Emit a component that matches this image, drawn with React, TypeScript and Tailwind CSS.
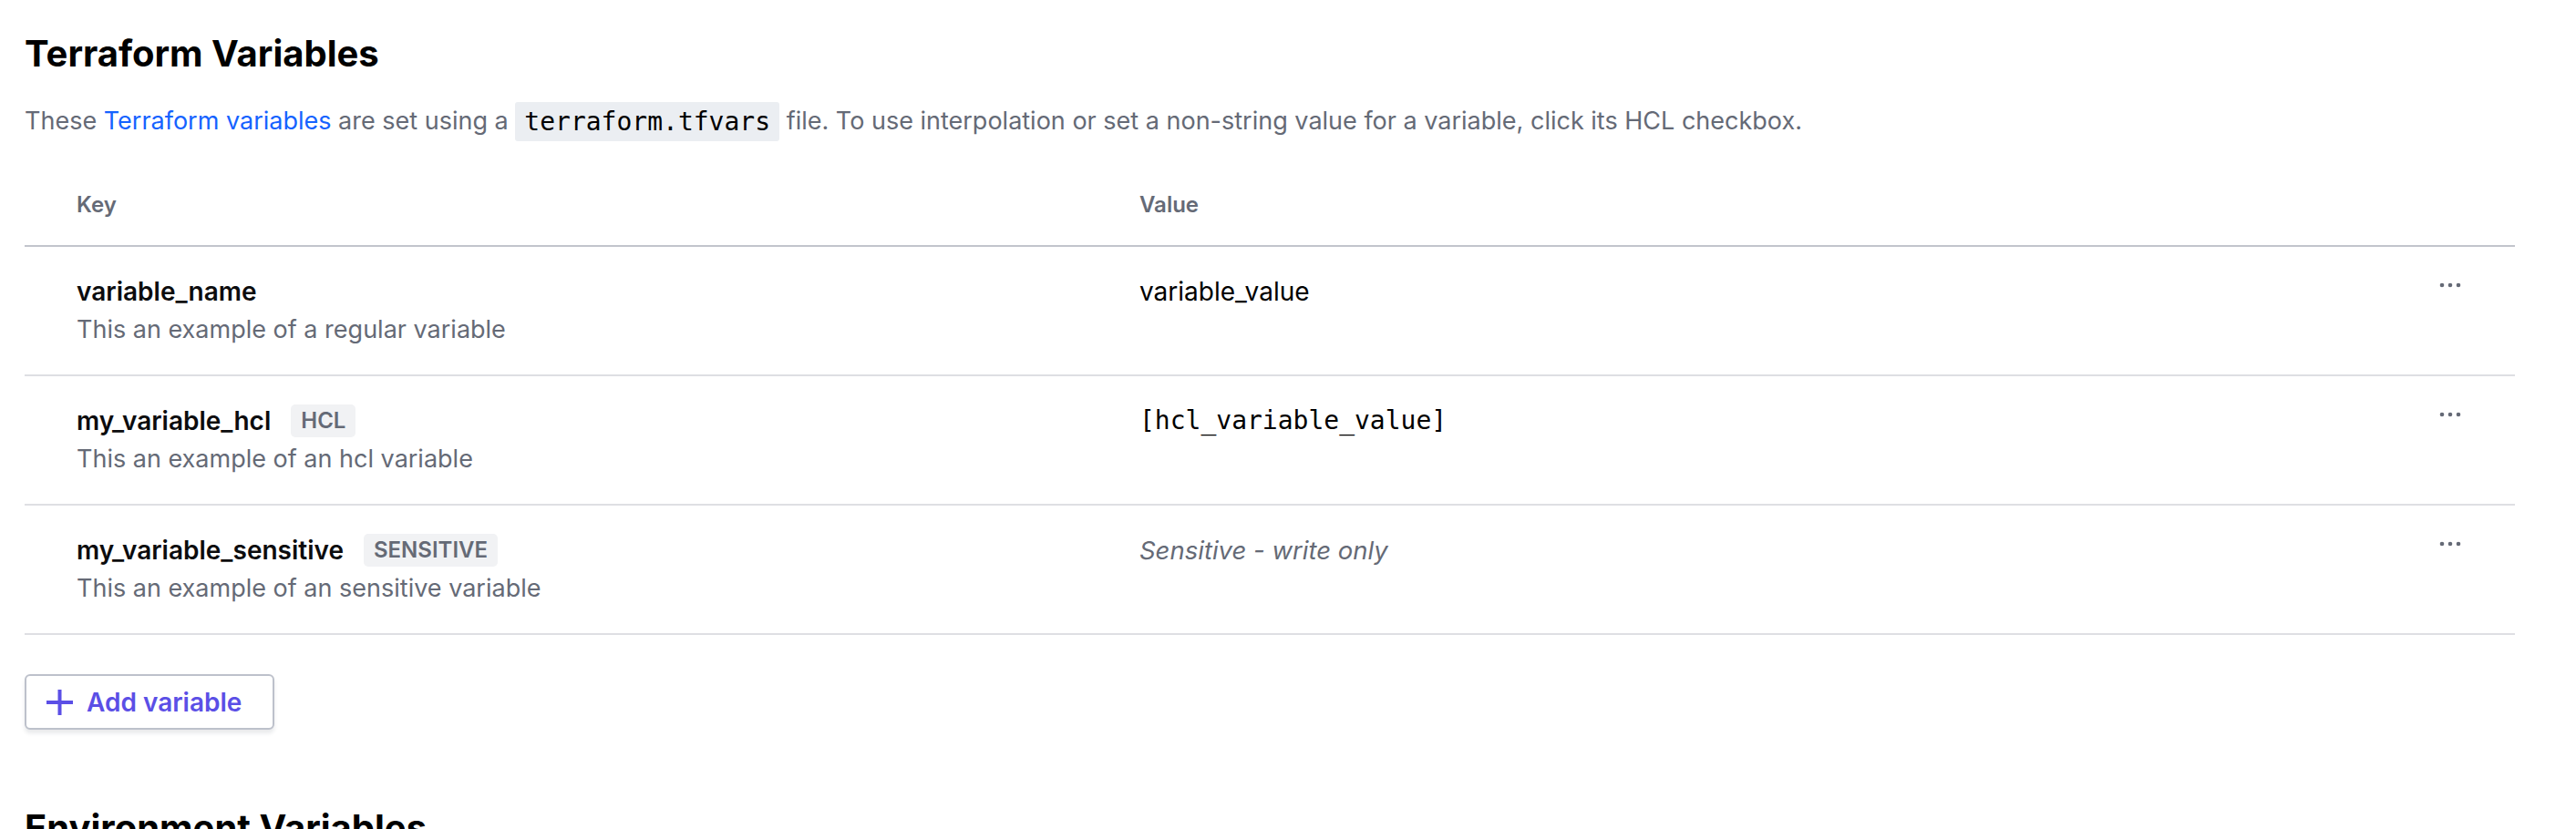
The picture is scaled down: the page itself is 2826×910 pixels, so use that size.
import React from "react";

interface Variable {
  name: string;
  description: string;
  value: string;
  kind: "regular" | "hcl" | "sensitive";
}

const variables: Variable[] = [
  {
    name: "variable_name",
    description: "This an example of a regular variable",
    value: "variable_value",
    kind: "regular",
  },
  {
    name: "my_variable_hcl",
    description: "This an example of an hcl variable",
    value: "[hcl_variable_value]",
    kind: "hcl",
  },
  {
    name: "my_variable_sensitive",
    description: "This an example of an sensitive variable",
    value: "Sensitive - write only",
    kind: "sensitive",
  },
];

const Badge: React.FC<{ label: string }> = ({ label }) => (
  <span className="inline-flex h-[36px] items-center rounded-[5px] bg-[#f1f2f4] px-[11px] text-[24px] font-semibold leading-[36px] text-[#656a76]">
    {label}
  </span>
);

const Dots: React.FC = () => (
  <svg width="26" height="6" viewBox="0 0 26 6" fill="#656a76">
    <circle cx="4" cy="3" r="2.3" />
    <circle cx="13" cy="3" r="2.3" />
    <circle cx="22" cy="3" r="2.3" />
  </svg>
);

const PlusIcon: React.FC = () => (
  <svg width="29" height="28" viewBox="0 0 29 28" fill="none" stroke="#5b4fe6" strokeWidth="4">
    <path d="M14.5 0v28M0 14h29" />
  </svg>
);

const VariableRow: React.FC<{ variable: Variable }> = ({ variable }) => (
  <div className="grid grid-cols-[1166px_1fr_120px] border-b-2 border-[#dedfe3] pt-[28px] pb-[28px]">
    <div className="pl-[57px]">
      <div className="flex h-[42px] items-center gap-[22px]">
        <span className="text-[28px] font-semibold leading-[42px] text-[#0c0c0e]">{variable.name}</span>
        {variable.kind === "hcl" && <Badge label="HCL" />}
        {variable.kind === "sensitive" && <Badge label="SENSITIVE" />}
      </div>
      <div className="text-[27px] leading-[42px] text-[#656a76]">{variable.description}</div>
    </div>
    <div className="pl-[57px]">
      {variable.kind === "hcl" ? (
        <span className="font-['DejaVu_Sans_Mono',monospace] text-[28px] leading-[42px] text-black">
          {variable.value}
        </span>
      ) : variable.kind === "sensitive" ? (
        <span className="text-[27.5px] italic leading-[42px] text-[#656a76]">{variable.value}</span>
      ) : (
        <span className="text-[28px] leading-[42px] text-black">{variable.value}</span>
      )}
    </div>
    <div className="pl-[36px]">
      <button className="flex h-[28px] items-center">
        <Dots />
      </button>
    </div>
  </div>
);

export default function App() {
  return (
    <div className="min-h-screen bg-white pl-[27px] pr-[67px] pt-[35px] font-['Inter',sans-serif]">
      {/* Terraform variables section */}
      <h2 className="text-[40px] font-bold leading-[48px] text-black">Terraform Variables</h2>
      <p className="mt-[29px] mb-[26px] text-[27px] leading-[42px] text-[#656a76]">
        These <a className="text-[#1563ff]">Terraform variables</a> are set using a{" "}
        <code className="inline-block rounded-[3px] bg-[#ebeef2] px-[10px] font-['DejaVu_Sans_Mono',monospace] text-[28px] leading-[43px] text-black align-top">
          terraform.tfvars
        </code>{" "}
        file. To use interpolation or set a non-string value for a variable, click its HCL checkbox.
      </p>

      <div>
        <div className="grid grid-cols-[1166px_1fr_120px] border-b-2 border-[#c2c5cc] py-[26px] text-[24px] font-semibold leading-[36px] text-[#656a76]">
          <div className="pl-[57px]">Key</div>
          <div className="pl-[57px]">Value</div>
          <div />
        </div>
        {variables.map((v) => (
          <VariableRow key={v.name} variable={v} />
        ))}
      </div>

      <button className="mt-[43px] flex h-[61px] w-[274px] items-center gap-[15px] rounded-[6px] border-2 border-[#bdc1cb] bg-white pl-[22px] shadow-[0_4px_4px_rgba(101,106,118,0.14)]">
        <PlusIcon />
        <span className="text-[28px] font-semibold leading-[42px] text-[#5b4fe6]">Add variable</span>
      </button>

      {/* Environment variables section */}
      <h2 className="mt-[84px] text-[40px] font-bold leading-[48px] text-black">Environment Variables</h2>
    </div>
  );
}
